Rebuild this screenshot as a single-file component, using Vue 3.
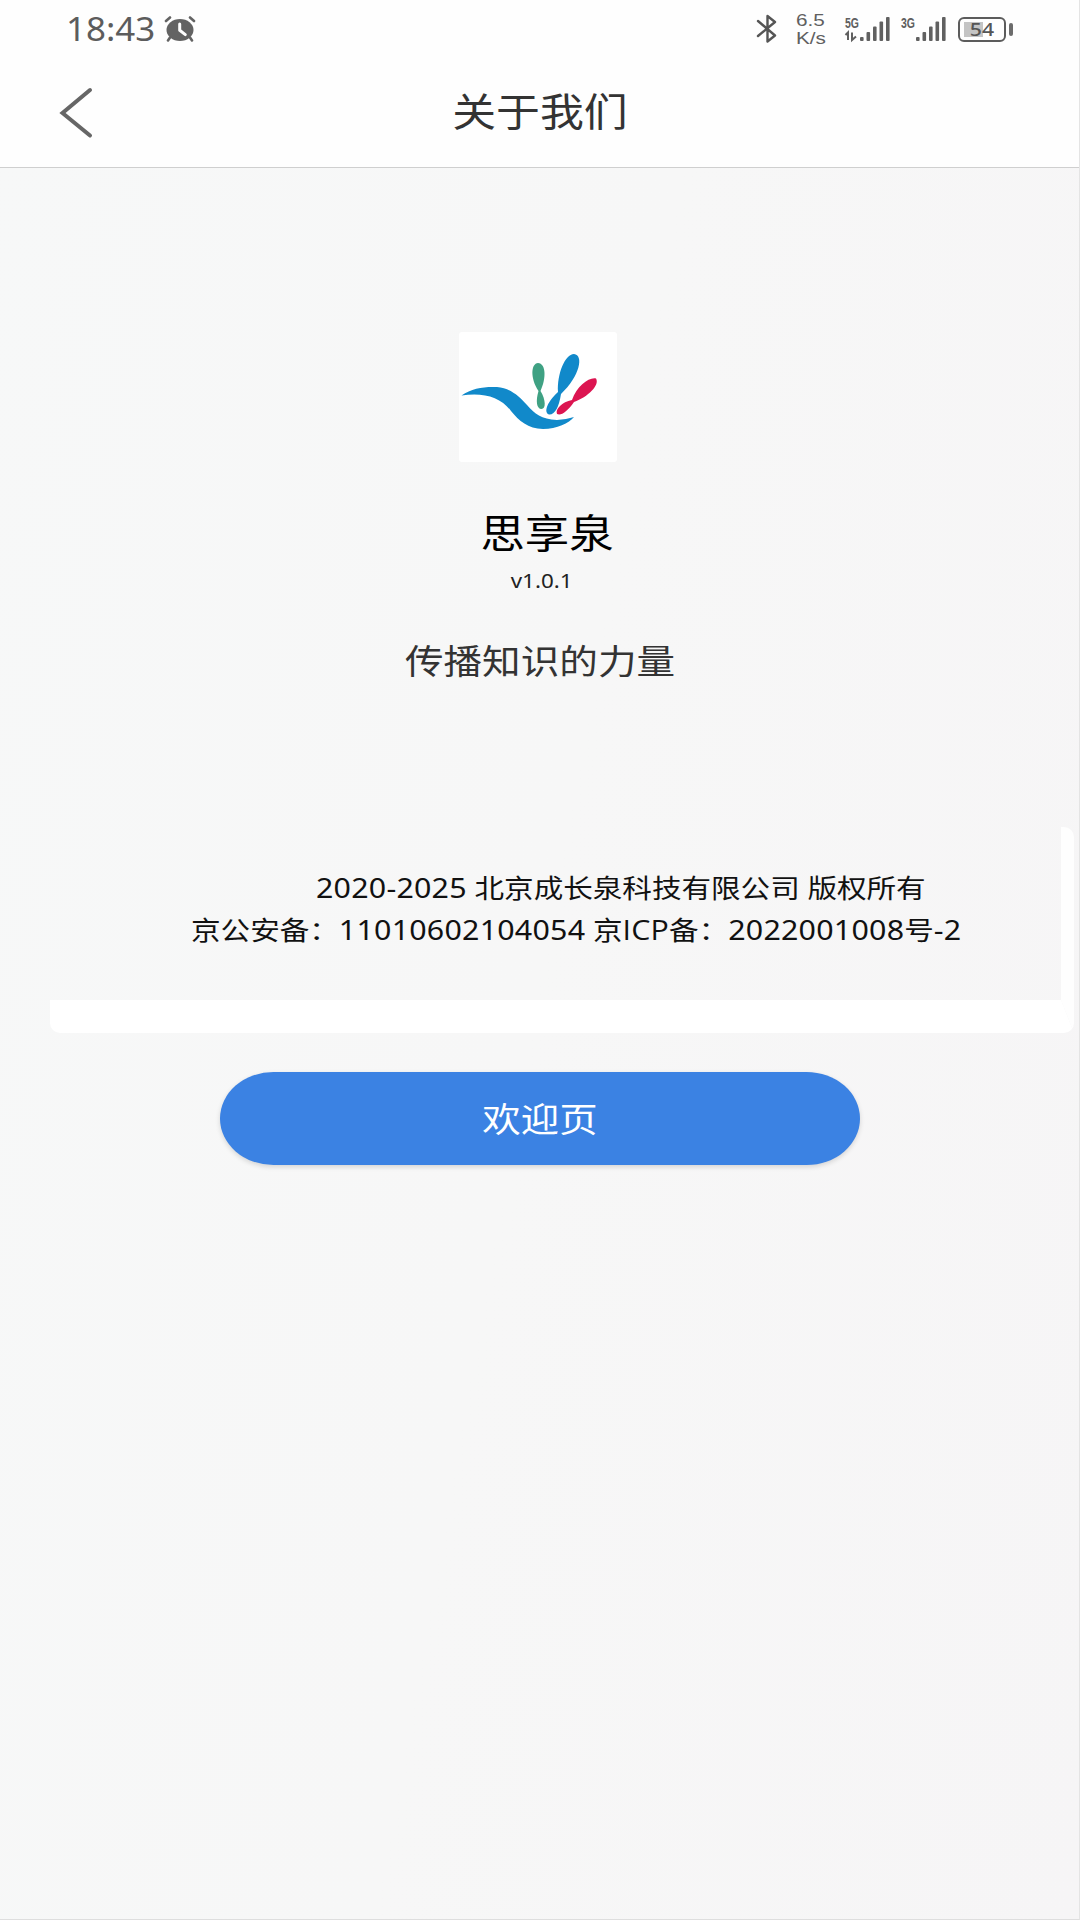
<template>
  <div class="about-page">
    <div class="status-bar">
      <div class="status-left">
        <span class="time">{{ time }}</span>
        <svg class="alarm" width="32" height="26" viewBox="0 0 32 26">
          <ellipse cx="16" cy="14" rx="13.5" ry="11" fill="#636363" />
          <path d="M2 5 L6 1.5 M30 5 L26 1.5 M6 21.5 L4 24.5 M26 21.5 L28 24.5" />
          <path class="hand" d="M15.7 8 V14.3 L21.3 18.6" />
        </svg>
      </div>
      <div class="status-right">
        <svg class="bluetooth" width="22" height="30" viewBox="0 0 22 30">
          <path d="M2 7 L19 21.5 L11.5 27.5 V2 L19 8 L2 22" />
        </svg>
        <div class="speed">
          <span>{{ speed.value }}</span>
          <span>{{ speed.unit }}</span>
        </div>
        <svg
          v-for="item in signals"
          :key="item.label"
          :class="['signal', item.name]"
          width="48"
          height="28"
          viewBox="0 0 48 28"
        >
          <text x="1" y="12.5" textLength="14" lengthAdjust="spacingAndGlyphs">{{ item.label }}</text>
          <path v-if="item.arrows" class="arrows" d="M1.5 20 L4 17.5 V25 M8 17.5 V25 L12 21.5" />
          <rect
            v-for="(bar, idx) in bars"
            :key="idx"
            :x="bar.x"
            :y="26 - bar.h"
            :height="bar.h"
            width="3.6"
            rx="1"
          />
        </svg>
        <div class="battery">
          <div class="battery-body">
            <div class="battery-level" :style="{ width: battery + '%' }"></div>
            <span>{{ battery }}</span>
          </div>
          <div class="battery-cap"></div>
        </div>
      </div>
    </div>

    <div class="nav-bar">
      <button class="back-btn" @click="goBack">
        <svg width="36" height="54" viewBox="0 0 36 54">
          <path d="M32 4 L4.5 27 L32 49.5" />
        </svg>
      </button>
      <h1>关于我们</h1>
    </div>

    <div class="content">
      <div class="logo">
        <svg width="158" height="130" viewBox="0 0 158 130">
          <path
            fill="#1189ca"
            d="M2.5 63.5 C13 56 25 54.5 38 55 C51 56 60 64 68 73 C76 82 82 87 98 88 C104 87.5 110 86.5 115 85 C110 91 98 97 84 97 C69 96.5 60 89 52 79 C42 65 24 60 2.5 63.5 Z"
          />
          <path
            fill="#3fa183"
            d="M79.5 59 C71 46 72 31.5 79 31 C87 31.5 87.500 46 81.5 59 C87 68 87 77 82.500 77 C77.500 77 76.500 69 79.5 59 Z"
          />
          <path
            fill="#1189ca"
            d="M99 60 C98 42 106 22 115 22 C125 23 121 44 102 62 C100 75 96 83 90 82.5 C84 80 89 69 99 60 Z"
          />
          <path
            fill="#dc1551"
            d="M113 68 C118 54 130 45 137 46.5 C141 53 129 65 115 70 C108 80 102 84 98 82 C96 77 103 70 113 68 Z"
          />
        </svg>
      </div>
      <h2>思享泉</h2>
      <p class="version">v1.0.1</p>
      <p class="slogan">传播知识的力量</p>

      <div class="panel">
        <div class="copyright">
          <p class="line owner"><b>2020-2025</b> 北京成长泉科技有限公司 版权所有</p>
          <p class="line record">京公安备：<b>11010602104054</b> 京<b class="icp">ICP</b>备：<b>2022001008</b>号<b>-2</b></p>
        </div>
      </div>

      <button class="welcome-btn"><span>欢迎页</span></button>
    </div>
  </div>
</template>

<script setup>
import { ref } from 'vue'

const time = ref('18:43')
const speed = ref({ value: '6.5', unit: 'K/s' })
const battery = ref(54)

const signals = [
  { name: 'sim-one', label: '5G', arrows: true },
  { name: 'sim-two', label: '3G', arrows: false }
]

// 信号强度条
const bars = [
  { x: 16, h: 4 },
  { x: 22.5, h: 9 },
  { x: 29, h: 14.5 },
  { x: 35.5, h: 19.5 },
  { x: 42, h: 24 }
]

// 返回上一页
const goBack = () => {
  window.history.back()
}
</script>

<style>
body {
  margin: 0;
}
</style>

<style scoped>
.about-page {
  box-sizing: border-box;
  width: 1080px;
  height: 1920px;
  overflow: hidden;
  border-right: 1px solid #e4e4e4;
  border-bottom: 1px solid #dedede;
  background: linear-gradient(100deg, #f7f8f8 0%, #f7f7f7 50%, #f6f5f6 100%);
  font-family: 'Noto Sans', 'Noto Sans CJK SC', sans-serif;
}

h1,
h2,
p {
  margin: 0;
  font-weight: 400;
  white-space: nowrap;
}

button {
  padding: 0;
  border: none;
  background: none;
  font-family: inherit;
}

svg {
  display: block;
  flex-shrink: 0;
}

.status-bar {
  display: flex;
  justify-content: space-between;
  height: 58px;
  padding: 0 66px;
  background: #fefefe;
}

.status-left,
.status-right {
  display: flex;
  align-items: center;
  height: 58px;
}

.time {
  width: 98px;
  font-size: 32px;
  line-height: 58px;
  color: #5c5c5c;
  transform: scaleX(1.09);
  transform-origin: left;
}

.alarm path {
  fill: none;
  stroke: #636363;
  stroke-width: 2.6;
  stroke-linecap: round;
}

.alarm .hand {
  stroke: #fefefe;
  stroke-width: 3;
  stroke-linejoin: round;
}

.bluetooth {
  margin-right: 18px;
}

.bluetooth path {
  fill: none;
  stroke: #555;
  stroke-width: 2.4;
  stroke-linejoin: round;
  stroke-linecap: round;
}

.speed {
  display: flex;
  flex-direction: column;
  gap: 1px;
  width: 48px;
  font-family: 'Liberation Sans', sans-serif;
  font-size: 17px;
  line-height: 17px;
  color: #606060;
  transform: scaleX(1.22);
  transform-origin: left;
}

.signal {
  fill: #606060;
}

.signal text {
  font-family: 'Liberation Sans', sans-serif;
  font-size: 15px;
  font-weight: 700;
}

.signal .arrows {
  fill: none;
  stroke: #606060;
  stroke-width: 2;
}

.sim-one {
  margin-right: 8px;
}

.sim-two {
  margin-right: 10px;
}

.battery {
  display: flex;
  align-items: center;
  gap: 3px;
}

.battery-body {
  position: relative;
  box-sizing: border-box;
  width: 48px;
  height: 25px;
  padding: 3px 4px;
  border: 2px solid #5c5c5c;
  border-radius: 6px;
}

.battery-level {
  height: 15px;
  background: #c4c4c4;
}

.battery-body span {
  position: absolute;
  inset: 0;
  font-size: 18px;
  font-weight: 500;
  line-height: 21px;
  text-align: center;
  color: #555;
  transform: scaleX(1.18);
}

.battery-cap {
  width: 4px;
  height: 13px;
  border-radius: 2px;
  background: #6c6c6c;
}

.nav-bar {
  display: flex;
  align-items: center;
  height: 109px;
  padding-right: 93px;
  padding-left: 58px;
  border-bottom: 1px solid #cfcfcf;
  background: #fefefe;
}

.back-btn path {
  fill: none;
  stroke: #666;
  stroke-width: 4;
  stroke-linecap: round;
}

h1 {
  flex: 1;
  margin-top: -4px;
  font-size: 39px;
  line-height: 60px;
  text-align: center;
  color: #333;
  transform: scaleX(1.125);
}

.content {
  display: flex;
  flex-direction: column;
  align-items: center;
  padding-top: 164px;
}

.logo {
  width: 158px;
  height: 130px;
  margin-right: 3px;
  border-radius: 3px;
  background: #fff;
}

h2 {
  margin-top: 41px;
  margin-left: 14px;
  font-size: 40px;
  line-height: 60px;
  color: #000;
  transform: scaleX(1.11);
}

.version {
  margin-top: 2px;
  margin-left: 4px;
  font-size: 20px;
  line-height: 32px;
  color: #222;
  transform: scaleX(1.12);
}

.slogan {
  margin-top: 38px;
  font-size: 34px;
  line-height: 52px;
  color: #333;
  transform: scaleX(1.135);
}

/* 白边卡片 */
.panel {
  box-sizing: border-box;
  align-self: flex-end;
  width: 1024px;
  height: 206px;
  margin-top: 140px;
  margin-right: 5px;
  border-right: 13px solid #fefefe;
  border-bottom: 33px solid #fff;
  border-radius: 10px;
}

.copyright {
  display: flex;
  flex-direction: column;
  padding-top: 40px;
}

.line {
  font-size: 25.8px;
  line-height: 42px;
  color: #111;
  transform: scaleX(1.146);
  transform-origin: left;
}

.line b {
  font-size: 26.5px;
  font-weight: 400;
  letter-spacing: 0.2px;
}

/* Open Sans 的 I 没有衬线 */
.line .icp {
  font-family: 'Open Sans', sans-serif;
}

.owner {
  margin-left: 266px;
}

.record {
  margin-left: 141px;
}

.welcome-btn {
  width: 640px;
  height: 93px;
  margin-top: 39px;
  margin-left: 1px;
  border-radius: 54px / 47px;
  background: #3b82e3;
  box-shadow: 0 2px 5px rgba(0, 0, 0, 0.14);
  color: #fff;
}

.welcome-btn span {
  display: inline-block;
  font-size: 34px;
  line-height: 50px;
  transform: scaleX(1.13);
}
</style>
